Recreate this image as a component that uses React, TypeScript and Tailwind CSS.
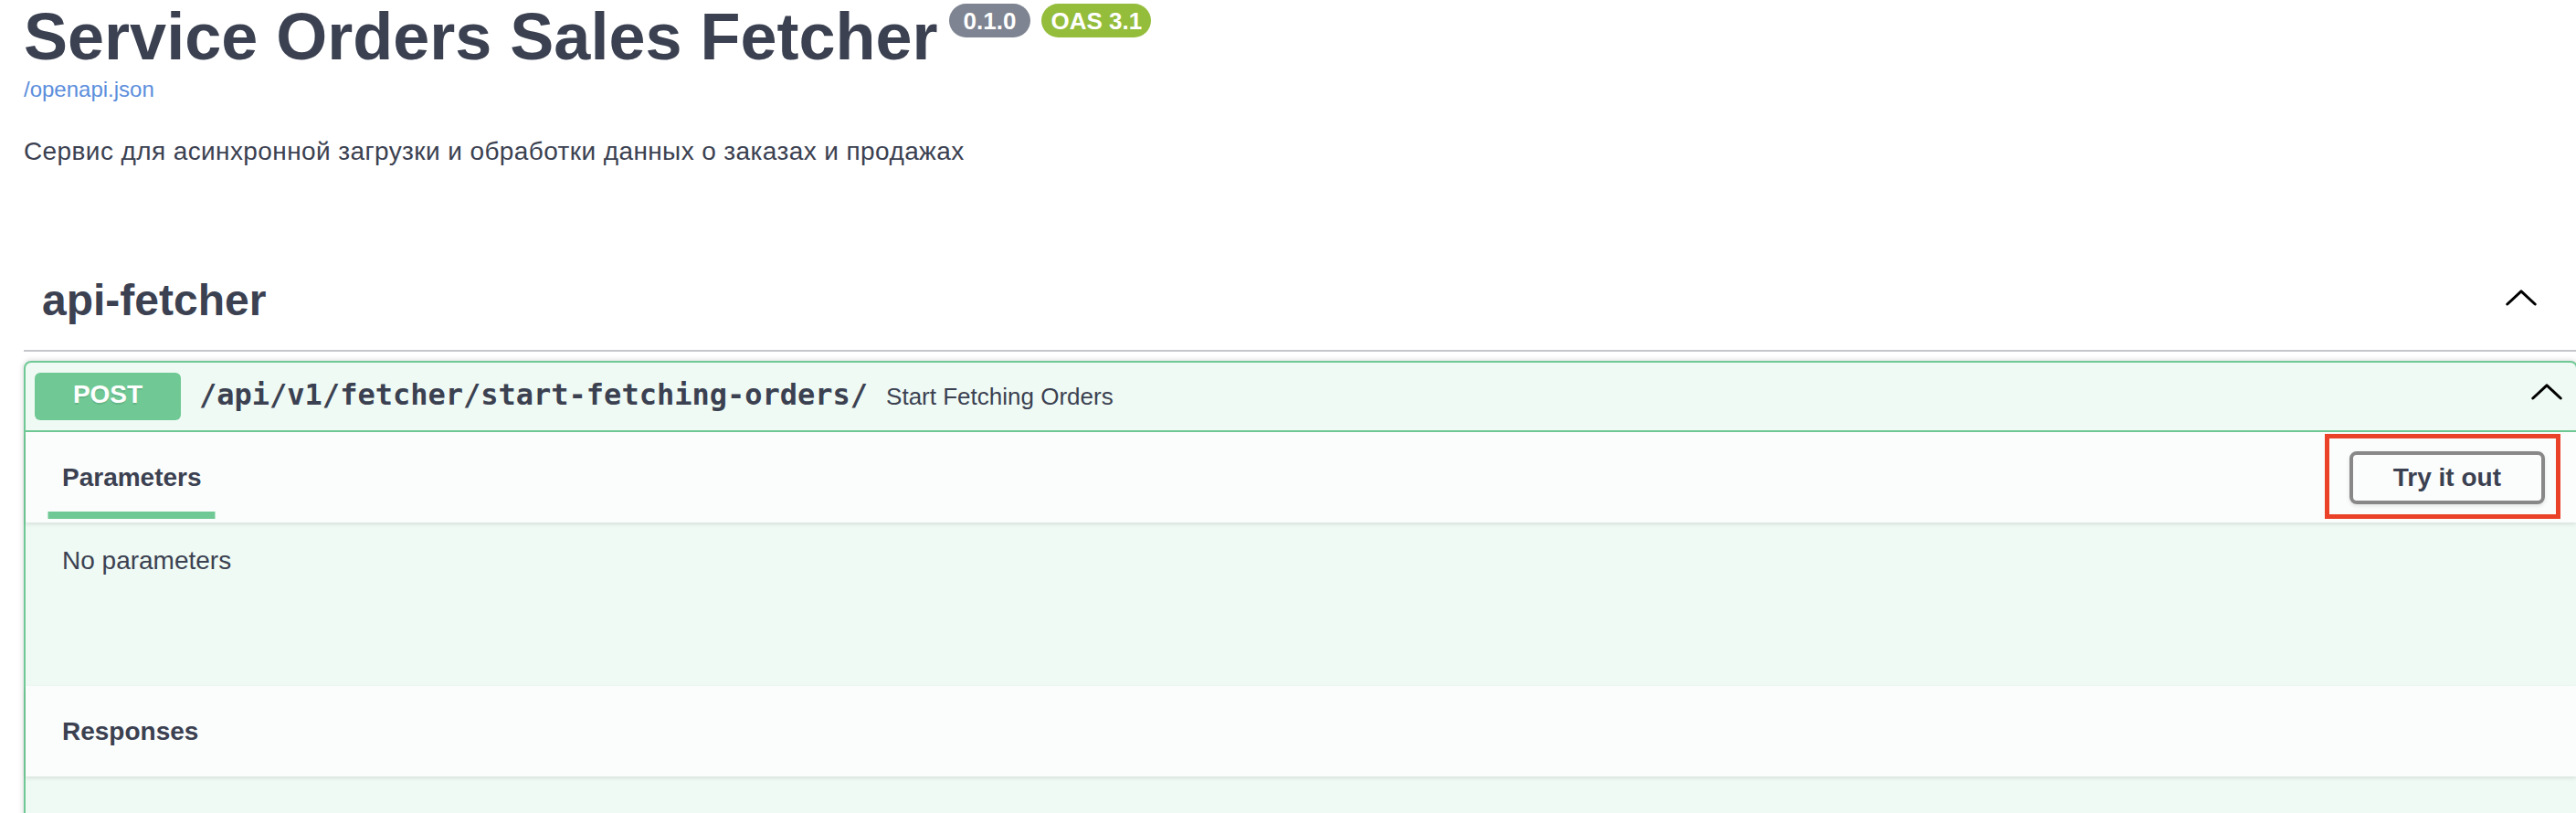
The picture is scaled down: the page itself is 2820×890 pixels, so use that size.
import React from 'react'

const Chevron = ({ className = '' }: { className?: string }) => (
  <svg width="34" height="18" viewBox="0 0 34 18" className={className} aria-hidden="true">
    <polyline points="1.8,16 17,1.8 32.2,16" fill="none" stroke="#000" strokeWidth="3" strokeLinecap="round" strokeLinejoin="round" />
  </svg>
)

function SectionHeader({ children, right }: { children: React.ReactNode; right?: React.ReactNode }) {
  return (
    <div className="relative z-10 flex h-[99px] items-center justify-between bg-[#fbfdfc] pl-[40px] pr-[34px] shadow-[0_2px_4px_rgba(0,0,0,0.1)]">
      {children}
      {right}
    </div>
  )
}

export default function App() {
  return (
    <div className="h-[890px] w-[2820px] overflow-hidden bg-white font-['Liberation_Sans',Arial,sans-serif] text-[#3b4151]">
      <div className="ml-[26px] w-[2796px]">
        {/* Info */}
        <div className="pt-[4px]">
          <div className="flex items-start">
            <h2 className="text-[72px] font-bold leading-[72px]">Service Orders Sales Fetcher</h2>
            <span className="ml-[12px] flex h-[37px] items-center rounded-full bg-[#7e8491] px-[16px] text-[26px] font-bold leading-none text-white">
              0.1.0
            </span>
            <span className="ml-[12px] flex h-[37px] items-center rounded-full bg-[#94bd3b] px-[10px] text-[26px] font-bold leading-none text-white">
              OAS 3.1
            </span>
          </div>
          <a href="#" className="mt-[8px] block text-[24px] leading-[28px] text-[#5b8edc]">
            /openapi.json
          </a>
          <p className="mt-[38px] text-[28px] leading-[32px] tracking-[0.4px]">
            Сервис для асинхронной загрузки и обработки данных о заказах и продажах
          </p>
        </div>

        {/* Tag */}
        <div className="mt-[89px] flex h-[114px] items-center justify-between border-b-2 border-[#c4c6cb] pl-[20px] pr-[45px]">
          <h3 className="pt-[3px] text-[48px] font-bold leading-[48px]">api-fetcher</h3>
          <Chevron className="mb-[3px]" />
        </div>

        {/* Operation */}
        <div className="mt-[10px] rounded-[8px] border-2 border-[#70c995] bg-[#effaf4] shadow-[0_0_6px_rgba(0,0,0,0.19)]">
          <div className="flex h-[76px] items-center border-b-2 border-[#70c995] px-[10px]">
            <span className="flex h-[52px] w-[160px] items-center justify-center rounded-[6px] bg-[#70c995] pb-[4px] text-[28px] font-bold leading-[28px] text-white [text-shadow:0_2px_0_rgba(0,0,0,0.1)]">
              POST
            </span>
            <span className="px-[20px] pb-[4px] font-['DejaVu_Sans_Mono',monospace] text-[32px] font-bold">
              /api/v1/fetcher/start-fetching-orders/
            </span>
            <span className="text-[26px]">Start Fetching Orders</span>
            <Chevron className="mb-[10px] ml-auto mr-[5px]" />
          </div>

          <SectionHeader
            right={
              <div className="relative">
                <button className="h-[58px] rounded-[8px] border-4 border-[#888888] px-[44px] text-[28px] font-bold text-[#3b4151] shadow-[0_2px_4px_rgba(0,0,0,0.1)]">
                  Try it out
                </button>
                <div className="absolute -bottom-[16px] -left-[27px] -right-[17px] -top-[19px] border-[5px] border-[#ea4228]" />
              </div>
            }
          >
            <h4 className="text-[28px] font-bold">
              <span className="relative">
                Parameters
                <span className="absolute -bottom-[30px] left-1/2 h-[8px] w-[120%] -translate-x-1/2 bg-[#70c995]" />
              </span>
            </h4>
          </SectionHeader>

          <div className="h-[179px] pl-[40px] pt-[26px]">
            <p className="text-[28px] leading-[32px]">No parameters</p>
          </div>

          <div className="h-[100px]">
            <SectionHeader>
              <h4 className="text-[28px] font-bold">Responses</h4>
            </SectionHeader>
          </div>

          <div className="h-[80px]" />
        </div>
      </div>
    </div>
  )
}
